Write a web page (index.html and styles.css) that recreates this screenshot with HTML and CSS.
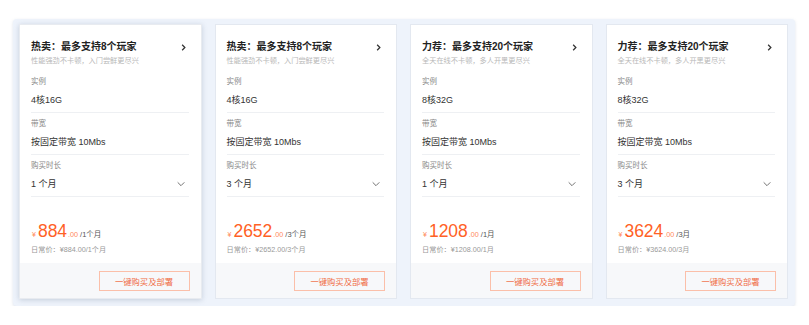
FILE: index.html
```html
<!DOCTYPE html>
<html lang="zh-CN">
<head>
  <meta charset="UTF-8">
  <title>服务器套餐</title>
  <link rel="stylesheet" href="styles.css">
</head>
<body>
  <div class="panel">
    <div class="card active">
      <div class="cardBody">
        <div class="head">
          <div class="titleRow">
            <h3>热卖：最多支持8个玩家</h3>
            <svg class="arrow" viewBox="0 0 10 10"><path d="M3.5 2 L6.5 5 L3.5 8" /></svg>
          </div>
          <p class="sub">性能强劲不卡顿，入门尝鲜更尽兴</p>
        </div>
        <div class="item">
          <div class="label">实例</div>
          <div class="value">4核16G</div>
        </div>
        <div class="item">
          <div class="label">带宽</div>
          <div class="value">按固定带宽 10Mbs</div>
        </div>
        <div class="item">
          <div class="label">购买时长</div>
          <div class="value select">1 个月
            <svg class="down" viewBox="0 0 12 12"><path d="M2 4 L6 8 L10 4" /></svg>
          </div>
        </div>
        <div class="price">
          <div class="now"><span class="yen">¥</span><span class="num">884</span><span class="dec">.00</span><span class="unit">/1个月</span></div>
          <div class="daily">日常价：¥884.00/1个月</div>
        </div>
      </div>
      <div class="foot"><button class="buy">一键购买及部署</button></div>
    </div>

    <div class="card">
      <div class="cardBody">
        <div class="head">
          <div class="titleRow">
            <h3>热卖：最多支持8个玩家</h3>
            <svg class="arrow" viewBox="0 0 10 10"><path d="M3.5 2 L6.5 5 L3.5 8" /></svg>
          </div>
          <p class="sub">性能强劲不卡顿，入门尝鲜更尽兴</p>
        </div>
        <div class="item">
          <div class="label">实例</div>
          <div class="value">4核16G</div>
        </div>
        <div class="item">
          <div class="label">带宽</div>
          <div class="value">按固定带宽 10Mbs</div>
        </div>
        <div class="item">
          <div class="label">购买时长</div>
          <div class="value select">3 个月
            <svg class="down" viewBox="0 0 12 12"><path d="M2 4 L6 8 L10 4" /></svg>
          </div>
        </div>
        <div class="price">
          <div class="now"><span class="yen">¥</span><span class="num">2652</span><span class="dec">.00</span><span class="unit">/3个月</span></div>
          <div class="daily">日常价：¥2652.00/3个月</div>
        </div>
      </div>
      <div class="foot"><button class="buy">一键购买及部署</button></div>
    </div>

    <div class="card">
      <div class="cardBody">
        <div class="head">
          <div class="titleRow">
            <h3>力荐：最多支持20个玩家</h3>
            <svg class="arrow" viewBox="0 0 10 10"><path d="M3.5 2 L6.5 5 L3.5 8" /></svg>
          </div>
          <p class="sub">全天在线不卡顿，多人开黑更尽兴</p>
        </div>
        <div class="item">
          <div class="label">实例</div>
          <div class="value">8核32G</div>
        </div>
        <div class="item">
          <div class="label">带宽</div>
          <div class="value">按固定带宽 10Mbs</div>
        </div>
        <div class="item">
          <div class="label">购买时长</div>
          <div class="value select">1 个月
            <svg class="down" viewBox="0 0 12 12"><path d="M2 4 L6 8 L10 4" /></svg>
          </div>
        </div>
        <div class="price">
          <div class="now"><span class="yen">¥</span><span class="num">1208</span><span class="dec">.00</span><span class="unit">/1月</span></div>
          <div class="daily">日常价：¥1208.00/1月</div>
        </div>
      </div>
      <div class="foot"><button class="buy">一键购买及部署</button></div>
    </div>

    <div class="card">
      <div class="cardBody">
        <div class="head">
          <div class="titleRow">
            <h3>力荐：最多支持20个玩家</h3>
            <svg class="arrow" viewBox="0 0 10 10"><path d="M3.5 2 L6.5 5 L3.5 8" /></svg>
          </div>
          <p class="sub">全天在线不卡顿，多人开黑更尽兴</p>
        </div>
        <div class="item">
          <div class="label">实例</div>
          <div class="value">8核32G</div>
        </div>
        <div class="item">
          <div class="label">带宽</div>
          <div class="value">按固定带宽 10Mbs</div>
        </div>
        <div class="item">
          <div class="label">购买时长</div>
          <div class="value select">3 个月
            <svg class="down" viewBox="0 0 12 12"><path d="M2 4 L6 8 L10 4" /></svg>
          </div>
        </div>
        <div class="price">
          <div class="now"><span class="yen">¥</span><span class="num">3624</span><span class="dec">.00</span><span class="unit">/3月</span></div>
          <div class="daily">日常价：¥3624.00/3月</div>
        </div>
      </div>
      <div class="foot"><button class="buy">一键购买及部署</button></div>
    </div>
  </div>
</body>
</html>
```

FILE: styles.css
```css
* {
  margin: 0;
  padding: 0;
  box-sizing: border-box;
  font-family: "Liberation Sans", "Noto Sans CJK SC", sans-serif;
}

body {
  background-color: #ffffff;
  padding: 19px 14px 0 13px;
}

.panel {
  display: grid;
  grid-template-columns: repeat(4, 1fr);
  gap: 13px;
  padding: 5px 7px 7px 6px;
  background-color: #eef3fb;
  border-radius: 4px;
  box-shadow: 0 1px 3px rgba(120, 140, 170, 0.25);
}

.card {
  display: flex;
  flex-direction: column;
  background-color: #ffffff;
  border: 1px solid #e3e8f0;
}

.card.active {
  border-color: #e8ebf0;
  box-shadow: 0 1px 5px rgba(90, 110, 140, 0.28);
}

.cardBody {
  padding: 15px 12px 0 11px;
}

.head {
  margin-bottom: 4px;
}

.titleRow {
  display: flex;
  align-items: center;
  justify-content: space-between;
}

.titleRow h3 {
  font-size: 10px;
  line-height: 14px;
  font-weight: bold;
  color: #222;
}

.arrow {
  width: 9px;
  height: 9px;
  margin-right: 1px;
}

.arrow path,
.down path {
  fill: none;
  stroke: #333;
  stroke-width: 1.4;
}

.sub {
  font-size: 7.2px;
  line-height: 12px;
  color: #b8b8b8;
  margin-top: 1px;
}

.item {
  padding: 5px 0;
  border-bottom: 1px solid #eef0f3;
}

.label {
  font-size: 7.5px;
  line-height: 12px;
  color: #888;
}

.value {
  margin-top: 5px;
  font-size: 9px;
  line-height: 14px;
  color: #333;
}

.select {
  display: flex;
  align-items: center;
  justify-content: space-between;
}

.down {
  width: 10px;
  height: 10px;
  margin-right: 3px;
}

.down path {
  stroke: #666;
  stroke-width: 1.1;
}

.price {
  margin-top: 24px;
  margin-bottom: 7px;
}

.now {
  display: flex;
  align-items: baseline;
  height: 20px;
  line-height: 20px;
  color: #ff6126;
}

.now .yen,
.now .dec,
.now .unit {
  line-height: 1;
}

.yen {
  font-size: 7px;
  margin: 0 2px 0 1px;
  color: #ff8a5c;
}

.num {
  font-size: 17.5px;
}

.dec {
  font-size: 7.2px;
  margin-left: 1px;
  color: #ff8a5c;
}

.unit {
  font-size: 7.5px;
  margin-left: 2px;
  color: #555;
}

.daily {
  margin-top: 3px;
  height: 12px;
  font-size: 7.2px;
  line-height: 12px;
  color: #999;
}

.foot {
  flex: 1;
  display: flex;
  justify-content: flex-end;
  padding: 8px 11px 7px 0;
  background-color: #f7f8fa;
}

.buy {
  width: 91px;
  height: 20px;
  font-size: 8.3px;
  color: #f06c45;
  background-color: transparent;
  border: 1px solid #fbbfa9;
  cursor: pointer;
}
```
